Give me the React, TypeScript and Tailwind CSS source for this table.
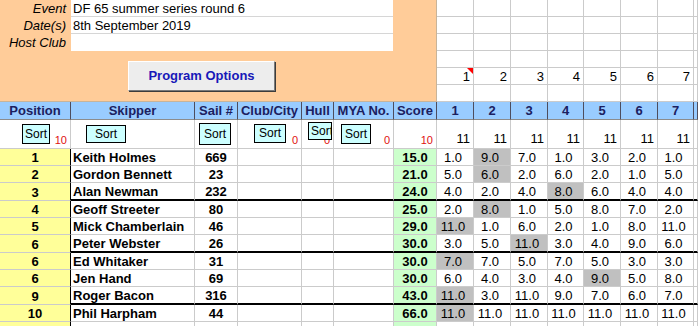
import React from "react";

type Result = {
  pos: string;
  name: string;
  sail: string;
  score: string;
  races: string[];
  drop: number;
  line?: boolean;
};

const results: Result[] = [
  { pos: "1", name: "Keith Holmes", sail: "669", score: "15.0", races: ["1.0", "9.0", "7.0", "1.0", "3.0", "2.0", "1.0"], drop: 1 },
  { pos: "2", name: "Gordon Bennett", sail: "23", score: "21.0", races: ["5.0", "6.0", "2.0", "6.0", "2.0", "1.0", "5.0"], drop: 1 },
  { pos: "3", name: "Alan Newman", sail: "232", score: "24.0", races: ["4.0", "2.0", "4.0", "8.0", "6.0", "4.0", "4.0"], drop: 3, line: true },
  { pos: "4", name: "Geoff Streeter", sail: "80", score: "25.0", races: ["2.0", "8.0", "1.0", "5.0", "8.0", "7.0", "2.0"], drop: 1 },
  { pos: "5", name: "Mick Chamberlain", sail: "46", score: "29.0", races: ["11.0", "1.0", "6.0", "2.0", "1.0", "8.0", "11.0"], drop: 0 },
  { pos: "6", name: "Peter Webster", sail: "26", score: "30.0", races: ["3.0", "5.0", "11.0", "3.0", "4.0", "9.0", "6.0"], drop: 2, line: true },
  { pos: "6", name: "Ed Whitaker", sail: "31", score: "30.0", races: ["7.0", "7.0", "5.0", "7.0", "5.0", "3.0", "3.0"], drop: 0 },
  { pos: "6", name: "Jen Hand", sail: "69", score: "30.0", races: ["6.0", "4.0", "3.0", "4.0", "9.0", "5.0", "8.0"], drop: 4 },
  { pos: "9", name: "Roger Bacon", sail: "316", score: "43.0", races: ["11.0", "3.0", "11.0", "9.0", "7.0", "6.0", "7.0"], drop: 0, line: true },
  { pos: "10", name: "Phil Harpham", sail: "44", score: "66.0", races: ["11.0", "11.0", "11.0", "11.0", "11.0", "11.0", "11.0"], drop: 0 },
];

// widths of the race columns 1..7 (right gridline included)
const raceW = ["w-[37px]", "w-[37px]", "w-[37px]", "w-[36px]", "w-[37px]", "w-[37px]", "w-[36px]"];

const grid = "border-r border-b border-[#cbcbcb]";

const SortButton: React.FC<{ className: string; clip?: boolean }> = ({ className, clip }) => (
  <div
    className={`absolute bg-[#ccffff] border border-black text-[12px] leading-[13px] flex items-center overflow-hidden whitespace-nowrap ${clip ? "justify-start pl-[2px]" : "justify-center"} ${className}`}
  >
    Sort
  </div>
);

const TopArea: React.FC = () => {
  const fields = [
    ["Event", "DF 65 summer series round 6"],
    ["Date(s)", "8th September 2019"],
    ["Host Club", ""],
  ];
  return (
    <div className="flex h-[102px]">
      <div className="w-[437px] shrink-0 bg-[#ffcc99] border-r border-b border-[#c8b49a]">
        {fields.map(([label, value], i) => (
          <div key={label} className="flex h-[17px]">
            <div className="w-[71px] shrink-0 flex items-end justify-end pr-[5px] pb-[1px] italic leading-[15px]">{label}</div>
            <div className={`w-[322px] shrink-0 bg-white flex items-end pl-[2px] leading-[15px] ${i < 2 ? "border-b border-[#d6d6d6]" : ""}`}>
              {value}
            </div>
          </div>
        ))}
        <button className="mt-[10px] ml-[128px] w-[147px] h-[30px] flex items-center justify-center bg-[#ededed] border border-t-white border-l-white border-r-[#7a7a7a] border-b-[#7a7a7a] shadow-[1px_1px_0_#3c3c3c] font-bold text-[13px] text-[#1818b8]">
          Program Options
        </button>
      </div>
      <div className="flex-1 flex flex-col">
        {[0, 1, 2, 3, 4, 5].map((r) => (
          <div key={r} className="flex h-[17px]">
            {raceW.map((w, c) => (
              <div key={c} className={`${w} shrink-0 ${grid} relative flex items-end justify-end pr-[3px] leading-[15px]`}>
                {r === 4 ? c + 1 : ""}
                {r === 4 && c === 0 && (
                  <svg className="absolute top-0 right-0" width="6" height="6" viewBox="0 0 6 6">
                    <polygon points="0,0 6,0 6,6" fill="#ff0000" />
                  </svg>
                )}
              </div>
            ))}
            <div className={`flex-1 ${grid}`} />
          </div>
        ))}
      </div>
    </div>
  );
};

const HeaderRow: React.FC = () => {
  const head = "shrink-0 border-r border-b border-r-[#4d4d5e] border-b-[#8c8c8c] flex items-end justify-center leading-[14px] pb-[1px]";
  return (
    <div className="flex h-[18px] bg-[#99ccff] font-bold text-[#1b2060]">
      <div className={`w-[71px] ${head}`}>Position</div>
      <div className={`w-[124px] ${head}`}>Skipper</div>
      <div className={`w-[43px] ${head}`}>Sail #</div>
      <div className={`w-[64px] ${head}`}>Club/City</div>
      <div className={`w-[32px] ${head}`}>Hull</div>
      <div className={`w-[60px] ${head}`}>MYA No.</div>
      <div className={`w-[43px] ${head}`}>Score</div>
      {raceW.map((w, i) => (
        <div key={i} className={`${w} ${head}`}>
          {i + 1}
        </div>
      ))}
      <div className={`flex-1 ${head}`} />
    </div>
  );
};

const SortRow: React.FC = () => {
  const cell = `shrink-0 relative ${grid} flex items-end justify-end pr-[3px] pb-[2px]`;
  const red = "text-[11px] leading-[12px] text-[#e01010]";
  return (
    <div className="flex h-[29px]">
      <div className={`w-[71px] ${cell}`}>
        <span className={red}>10</span>
        <SortButton className="left-[22px] top-[4px] w-[28px] h-[20px]" />
      </div>
      <div className={`w-[124px] ${cell}`}>
        <SortButton className="left-[15px] top-[5px] w-[40px] h-[18px]" />
      </div>
      <div className={`w-[43px] ${cell}`}>
        <SortButton className="left-[4px] top-[3px] w-[32px] h-[22px]" />
      </div>
      <div className={`w-[64px] ${cell}`}>
        <span className={red}>0</span>
        <SortButton className="left-[16px] top-[4px] w-[32px] h-[19px]" />
      </div>
      <div className={`w-[32px] ${cell}`}>
        <span className={red}>0</span>
        <SortButton className="left-[6px] top-[2px] w-[24px] h-[18px]" clip />
      </div>
      <div className={`w-[60px] ${cell}`}>
        <span className={red}>0</span>
        <SortButton className="left-[7px] top-[4px] w-[30px] h-[20px]" />
      </div>
      <div className={`w-[43px] ${cell}`}>
        <span className={red}>10</span>
      </div>
      {raceW.map((w, i) => (
        <div key={i} className={`${w} ${cell} pb-[1px] leading-[15px]`}>
          11
        </div>
      ))}
      <div className={`flex-1 ${grid}`} />
    </div>
  );
};

const ResultRow: React.FC<{ r: Result }> = ({ r }) => {
  const bottom = r.line ? "border-b-2 border-b-black" : "border-b border-b-[#cbcbcb]";
  const cell = `shrink-0 border-r border-r-[#cbcbcb] ${bottom} flex items-end leading-[15px]`;
  return (
    <div className={`flex ${r.line ? "h-[18px]" : "h-[17px]"}`}>
      <div className="w-[71px] shrink-0 bg-[#ffff99] border-r border-r-black border-b border-b-[#cbcbcb] flex items-end justify-center leading-[15px] font-bold">
        {r.pos}
      </div>
      <div className={`w-[124px] ${cell} pl-[2px] font-bold`}>{r.name}</div>
      <div className={`w-[43px] ${cell} justify-center font-bold`}>{r.sail}</div>
      <div className={`w-[64px] ${cell}`} />
      <div className={`w-[32px] ${cell}`} />
      <div className={`w-[60px] ${cell}`} />
      <div className={`w-[43px] ${cell} justify-center bg-[#ccffcc] font-bold`}>{r.score}</div>
      {r.races.map((v, i) => (
        <div key={i} className={`${raceW[i]} ${cell} justify-center pr-[4px] ${i === r.drop ? "bg-[#c0c0c0]" : ""}`}>
          {v}
        </div>
      ))}
      <div className={`flex-1 border-r border-r-[#cbcbcb] ${bottom}`} />
    </div>
  );
};

const App: React.FC = () => {
  return (
    <div className="w-[698px] h-[326px] overflow-hidden bg-white text-black text-[13px] font-['Liberation_Sans',Arial,sans-serif]">
      <TopArea />
      <HeaderRow />
      <SortRow />
      {results.map((r, i) => (
        <ResultRow key={i} r={r} />
      ))}
      <div className="flex h-[17px]">
        <div className="w-[71px] shrink-0 bg-[#ffff99] border-r border-r-black border-b border-b-[#cbcbcb]" />
        <div className={`w-[124px] shrink-0 ${grid}`} />
        <div className={`w-[43px] shrink-0 ${grid}`} />
        <div className={`w-[64px] shrink-0 ${grid}`} />
        <div className={`w-[32px] shrink-0 ${grid}`} />
        <div className={`w-[60px] shrink-0 ${grid}`} />
        <div className={`w-[43px] shrink-0 bg-[#ccffcc] ${grid}`} />
        {raceW.map((w, i) => (
          <div key={i} className={`${w} shrink-0 ${grid}`} />
        ))}
        <div className={`flex-1 ${grid}`} />
      </div>
    </div>
  );
};

export default App;
